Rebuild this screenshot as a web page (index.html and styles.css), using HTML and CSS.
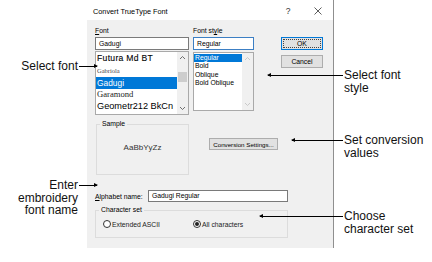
FILE: index.html
```html
<!DOCTYPE html>
<html lang="en">
<head>
    <meta charset="UTF-8">
    <meta name="viewport" content="width=device-width, initial-scale=1.0">
    <title>Convert TrueType Font</title>
    <link rel="stylesheet" href="styles.css">
</head>
<body>
    <div class="figure">
        <div class="dialog">
            <div class="titlebar">
                <span class="title">Convert TrueType Font</span>
                <span class="tb-btn">?</span>
                <span class="tb-btn">
                    <svg width="8" height="8" viewBox="0 0 8 8"><path d="M0.5 0.5 L7.5 7.5 M7.5 0.5 L0.5 7.5" stroke="#333" stroke-width="0.8" fill="none"/></svg>
                </span>
            </div>
            <div class="dlg-body">
                <div class="top-row">
                    <div class="font-col">
                        <label class="field-label"><u>F</u>ont</label>
                        <div class="textbox">Gadugi</div>
                        <div class="listbox font-list">
                            <div class="items">
                                <div class="item it-futura">Futura Md BT</div>
                                <div class="item it-gabriola">Gabriola</div>
                                <div class="item it-gadugi selected">Gadugi</div>
                                <div class="item it-garamond">Garamond</div>
                                <div class="item it-geometr">Geometr212 BkCn</div>
                            </div>
                            <div class="scrollbar">
                                <div class="sb-arrow">
                                    <svg width="7" height="5" viewBox="0 0 7 5"><path d="M1 4 L3.5 1.5 L6 4" stroke="#606060" stroke-width="0.9" fill="none"/></svg>
                                </div>
                                <div class="sb-track"><div class="sb-thumb"></div></div>
                                <div class="sb-arrow">
                                    <svg width="7" height="5" viewBox="0 0 7 5"><path d="M1 1 L3.5 3.5 L6 1" stroke="#606060" stroke-width="0.9" fill="none"/></svg>
                                </div>
                            </div>
                        </div>
                    </div>
                    <div class="style-col">
                        <label class="field-label">Font st<u>y</u>le</label>
                        <div class="textbox focused">Regular</div>
                        <div class="listbox style-list">
                            <div class="items">
                                <div class="item small selected">Regular</div>
                                <div class="item small">Bold</div>
                                <div class="item small">Oblique</div>
                                <div class="item small">Bold Oblique</div>
                            </div>
                            <div class="scrollbar">
                                <div class="sb-arrow">
                                    <svg width="7" height="5" viewBox="0 0 7 5"><path d="M1 4 L3.5 1.5 L6 4" stroke="#c4c4c4" stroke-width="0.9" fill="none"/></svg>
                                </div>
                                <div class="sb-track"></div>
                                <div class="sb-arrow">
                                    <svg width="7" height="5" viewBox="0 0 7 5"><path d="M1 1 L3.5 3.5 L6 1" stroke="#c4c4c4" stroke-width="0.9" fill="none"/></svg>
                                </div>
                            </div>
                        </div>
                    </div>
                    <div class="btn-col">
                        <button class="btn default">OK</button>
                        <button class="btn">Cancel</button>
                    </div>
                </div>

                <div class="mid-row">
                    <fieldset class="group sample">
                        <legend>Sample</legend>
                        <div class="sample-text">AaBbYyZz</div>
                    </fieldset>
                    <button class="btn conv">Conversion Settings...</button>
                </div>

                <div class="name-row">
                    <label class="name-label"><u>A</u>lphabet name:</label>
                    <div class="textbox name-box">Gadugi Regular</div>
                </div>

                <fieldset class="group charset">
                    <legend>Character set</legend>
                    <div class="radios">
                        <div class="radio-item first"><span class="radio"></span>Extended ASCII</div>
                        <div class="radio-item"><span class="radio checked"></span>All characters</div>
                    </div>
                </fieldset>
            </div>
        </div>

        <!-- callouts -->
        <div class="callout co-font">
            <div class="co-text left-text">Select font</div>
            <div class="co-line to-right"></div>
        </div>
        <div class="callout co-name">
            <div class="co-text left-text">Enter<br>embroidery<br>font name</div>
            <div class="co-line to-right"></div>
        </div>
        <div class="callout co-style">
            <div class="co-line to-left"></div>
            <div class="co-text">Select font<br>style</div>
        </div>
        <div class="callout co-conv">
            <div class="co-line to-left"></div>
            <div class="co-text">Set conversion<br>values</div>
        </div>
        <div class="callout co-charset">
            <div class="co-line to-left"></div>
            <div class="co-text">Choose<br>character set</div>
        </div>
    </div>
</body>
</html>
```

FILE: styles.css
```css
* {
    box-sizing: border-box;
}
body {
    margin: 0;
    background-color: #fff;
    font-family: "Liberation Sans", Arial, sans-serif;
}
.figure {
    position: relative;
    width: 432px;
    height: 262px;
    overflow: hidden;
}

/* dialog */
.dialog {
    margin-left: 87px;
    width: 247px;
    height: 248px;
    background-color: #f0f0f0;
    border-right: 1px solid #8f8f8f;
    display: flex;
    flex-direction: column;
    font-size: 6.8px;
    color: #000;
}
.titlebar {
    height: 20px;
    flex-shrink: 0;
    background-color: #fff;
    display: flex;
    align-items: center;
    padding: 2px 0 0 6px;
    font-size: 7.3px;
}
.title {
    flex: 1;
}
.tb-btn {
    width: 30px;
    display: flex;
    justify-content: center;
    font-size: 8.5px;
    color: #333;
}
.dlg-body {
    padding: 7px 0 0 8px;
    display: flex;
    flex-direction: column;
}
.top-row {
    display: flex;
    align-items: flex-start;
}
.font-col {
    width: 94px;
}
.style-col {
    width: 61px;
    margin-left: 4px;
}
.btn-col {
    width: 42px;
    margin-left: 27px;
    margin-top: 10px;
    display: flex;
    flex-direction: column;
    gap: 5px;
}
.field-label {
    display: block;
    height: 8px;
    line-height: 8px;
    margin-bottom: 2px;
}
.textbox {
    height: 13px;
    background-color: #fff;
    border: 1px solid #7a7a7a;
    padding: 0 3px;
    line-height: 11px;
    white-space: nowrap;
}
.textbox.focused {
    border-color: #3c7fc4;
}

/* list boxes */
.listbox {
    display: flex;
    background-color: #fff;
    border: 1px solid #a9a9a9;
}
.font-list {
    height: 64px;
    margin-top: 1px;
}
.style-list {
    height: 59px;
    margin-top: 2px;
}
.items {
    flex: 1;
    overflow: hidden;
}
.item {
    padding-left: 1px;
    white-space: nowrap;
    overflow: hidden;
}
.item.selected {
    background-color: #0078d7;
    color: #fff;
}
.it-futura {
    height: 12px;
    line-height: 12px;
    font-size: 8.6px;
    letter-spacing: 0.3px;
    -webkit-text-stroke: 0.1px #000;
}
.it-gabriola {
    height: 13px;
    line-height: 13px;
    font-family: "Liberation Serif", serif;
    font-size: 6.5px;
    color: #444;
}
.it-gadugi {
    height: 12px;
    line-height: 12px;
    font-size: 8.4px;
}
.it-garamond {
    height: 11px;
    line-height: 11px;
    font-family: "Liberation Serif", serif;
    font-size: 8.6px;
    color: #222;
}
.it-geometr {
    height: 13px;
    line-height: 13px;
    font-size: 9.2px;
}
.item.small {
    height: 8.5px;
    line-height: 8.5px;
}
.item.small:first-child {
    margin-top: 0.5px;
}
.scrollbar {
    width: 11px;
    display: flex;
    flex-direction: column;
    background-color: #f0f0f0;
}
.sb-arrow {
    height: 11px;
    display: flex;
    align-items: center;
    justify-content: center;
}
.sb-track {
    flex: 1;
    padding-top: 9px;
}
.sb-thumb {
    margin: 0 1px;
    height: 10px;
    background-color: #cdcdcd;
}

/* buttons */
.btn {
    height: 13px;
    padding: 0;
    font-family: inherit;
    font-size: 6.8px;
    color: #000;
    background-color: #e1e1e1;
    border: 1px solid #adadad;
}
.btn.default {
    border-color: #0078d7;
    outline: 1px dotted #444;
    outline-offset: -3px;
}
.btn.conv {
    width: 69px;
    height: 12px;
    margin: 18px 0 0 20px;
    font-size: 6.2px;
}

/* group boxes */
.group {
    margin: 0;
    padding: 0;
    min-width: 0;
    border: 1px solid #dcdcdc;
}
.group legend {
    margin-left: 3px;
    padding: 0 2px;
    line-height: 8px;
}
.mid-row {
    display: flex;
    align-items: flex-start;
    margin-top: 5px;
}
.sample {
    width: 93px;
    height: 55px;
    margin-left: 1px;
}
.sample-text {
    height: 38px;
    display: flex;
    align-items: center;
    justify-content: center;
    font-size: 8px;
    color: #333;
}
.name-row {
    display: flex;
    align-items: center;
    margin-top: 15px;
}
.name-label {
    width: 53px;
}
.name-box {
    width: 140px;
    height: 12px;
    line-height: 10px;
}
.charset {
    width: 193px;
    height: 32px;
    margin-top: 4px;
}
.radios {
    display: flex;
    align-items: center;
    padding: 6px 0 0 7px;
}
.radio-item {
    display: flex;
    align-items: center;
    gap: 1px;
    color: #222;
}
.radio-item.first {
    width: 90px;
}
.radio {
    width: 8px;
    height: 8px;
    border: 1px solid #333;
    border-radius: 50%;
    background-color: #fff;
    display: flex;
    align-items: center;
    justify-content: center;
}
.radio.checked::after {
    content: "";
    width: 4px;
    height: 4px;
    border-radius: 50%;
    background-color: #222;
}

/* callouts */
.callout {
    position: absolute;
    display: flex;
    align-items: flex-start;
    font-size: 12px;
    line-height: 12.5px;
    color: #111;
    white-space: nowrap;
}
.co-text.left-text {
    width: 78px;
    text-align: right;
}
.co-line {
    position: relative;
    height: 1px;
    margin-top: 6px;
    background-color: #000;
}
.to-right {
    margin-left: 1px;
}
.to-right::after {
    content: "";
    position: absolute;
    right: -1px;
    top: -2px;
    border-left: 4px solid #000;
    border-top: 2.5px solid transparent;
    border-bottom: 2.5px solid transparent;
}
.to-left {
    margin-right: 1px;
}
.to-left::before {
    content: "";
    position: absolute;
    left: -1px;
    top: -2px;
    border-right: 4px solid #000;
    border-top: 2.5px solid transparent;
    border-bottom: 2.5px solid transparent;
}
.co-font {
    left: 0;
    top: 60px;
}
.co-font .co-line {
    width: 18px;
}
.co-name {
    left: 0;
    top: 179px;
}
.co-name .co-line {
    width: 18px;
}
.co-style {
    left: 268px;
    top: 69px;
}
.co-style .co-line {
    width: 75px;
}
.co-conv {
    left: 292px;
    top: 134px;
}
.co-conv .co-line {
    width: 51px;
}
.co-charset {
    left: 260px;
    top: 210px;
}
.co-charset .co-line {
    width: 83px;
}
```
